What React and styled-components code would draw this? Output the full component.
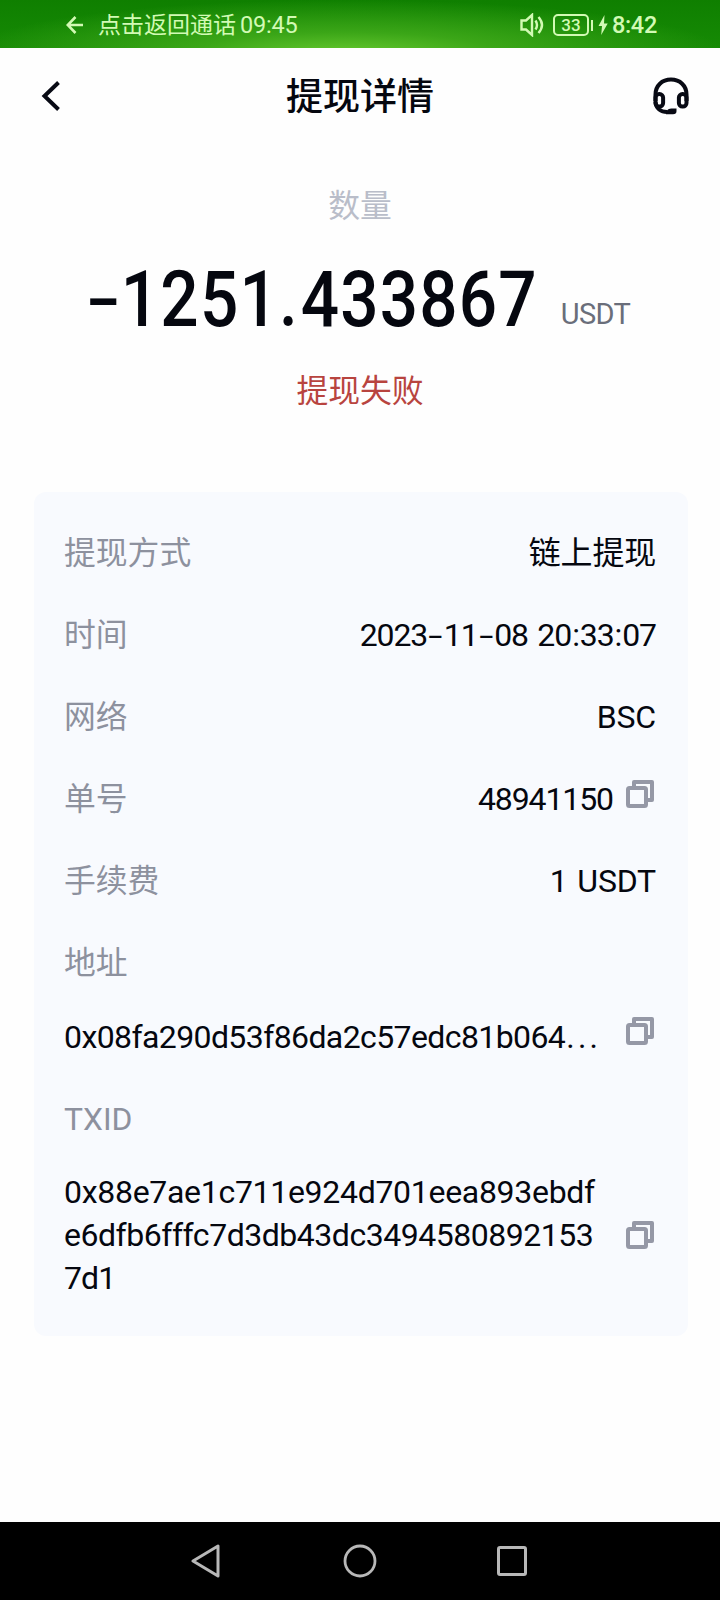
import React from "react";
import styled, { createGlobalStyle } from "styled-components";

const GlobalStyle = createGlobalStyle`
  * { box-sizing: border-box; }
  body {
    margin: 0;
    background: #fefefe;
    font-family: Roboto, "Noto Sans CJK SC", sans-serif;
    color: #05070f;
  }
`;

const Screen = styled.div`
  width: 720px;
  height: 1600px;
  display: flex;
  flex-direction: column;
  background: #fefefe;
  overflow: hidden;
`;

const StatusBar = styled.div`
  height: 48px;
  flex: none;
  display: flex;
  justify-content: space-between;
  align-items: center;
  padding: 2px 63px 0 66px;
  color: #d2fab4;
  background:
    radial-gradient(ellipse 380px 54px at 48% 112%, #66c92f 0%, rgba(72, 176, 30, 0.75) 40%, rgba(20, 132, 4, 0) 100%),
    linear-gradient(#0f7f00, #168a05);
`;

const StatusGroup = styled.div`
  display: flex;
  align-items: center;
`;

const ReturnText = styled.span`
  margin-left: 14px;
  padding-top: 2px;
  font-size: 23px;
  line-height: 30px;
  white-space: nowrap;
`;

const CallTime = styled.span`
  margin-left: 4px;
  font-size: 23.5px;
  line-height: 30px;
  letter-spacing: -0.2px;
`;

const Battery = styled.div`
  width: 36px;
  height: 22px;
  margin-left: 9px;
  border: 2px solid currentColor;
  border-radius: 5px;
  font-size: 17px;
  line-height: 18px;
  font-weight: 500;
  text-align: center;
`;

const BatteryTip = styled.div`
  width: 2px;
  height: 11px;
  margin: 0 5px 0 2px;
  background: currentColor;
`;

const Clock = styled.span`
  margin-left: 4px;
  font-size: 23.5px;
  line-height: 30px;
  font-weight: 500;
  letter-spacing: -0.3px;
`;

const Header = styled.header`
  height: 96px;
  flex: none;
  display: flex;
  align-items: center;
  justify-content: space-between;
  padding: 0 31px 0 40px;
`;

const HeaderSide = styled.div`
  width: 40px;
  display: flex;
  justify-content: ${(p) => p.$align || "flex-start"};
`;

const Title = styled.h1`
  margin: 0 0 0 -9px;
  padding-top: 3px;
  font-size: 37px;
  line-height: 52px;
  font-weight: 500;
`;

const Summary = styled.section`
  height: 348px;
  flex: none;
  display: flex;
  flex-direction: column;
  align-items: center;
  padding-top: 39px;
`;

const Caption = styled.div`
  font-size: 31.8px;
  line-height: 46px;
  color: ${(p) => p.$color};
`;

const AmountLine = styled.div`
  display: flex;
  align-items: baseline;
  margin: 21px 4px 23px 0;
  height: 95px;
  line-height: 95px;
  white-space: nowrap;
`;

const Amount = styled.span`
  display: block;
  width: 452px;
  font-size: 77.5px;
  font-weight: 500;
  letter-spacing: 1.4px;
  transform: translateY(2px) scaleX(0.87);
  transform-origin: left center;
`;

const Dash = styled.span`
  display: inline-block;
  width: ${(p) => p.$width || "0.52em"};
  text-align: center;
  letter-spacing: 0;
  transform: ${(p) => p.$scale || "scaleX(1.6)"};
`;

const Point = styled.span`
  padding-right: 2px;
`;

const Colon = styled.span`
  padding: 0 1px;
`;

const Unit = styled.span`
  margin-left: 23px;
  font-size: 29px;
  letter-spacing: -0.6px;
  color: #6a6e7a;
`;

const Card = styled.section`
  width: 654px;
  height: 844px;
  flex: none;
  margin-left: 34px;
  padding: 19px 32px 0 30px;
  border-radius: 12px;
  background: #f8fafe;
`;

const Row = styled.div`
  height: 82px;
  display: flex;
  align-items: center;
  justify-content: space-between;
`;

const Label = styled.span`
  padding-top: 2px;
  font-size: 31.8px;
  line-height: 46px;
  color: #8d919e;
`;

const Value = styled.span`
  display: flex;
  align-items: center;
  padding-top: 1px;
  font-size: 32px;
  line-height: 46px;
  letter-spacing: ${(p) => p.$spacing || "0"};
  word-spacing: ${(p) => p.$wordGap || "0"};
  white-space: pre;
`;

const HashRow = styled.div`
  display: flex;
  justify-content: space-between;
  align-items: ${(p) => (p.$multi ? "center" : "flex-start")};
  height: ${(p) => (p.$multi ? "152px" : "74px")};
  padding: ${(p) => (p.$multi ? "1px 0 0" : "13px 0 0")};
`;

const Hash = styled.div`
  font-size: 32px;
  line-height: 43px;
  white-space: nowrap;
`;

const HashLine = styled.div`
  letter-spacing: ${(p) => p.$spacing};
`;

const Ellipsis = styled.span`
  padding-left: 1px;
  letter-spacing: 3.2px;
`;

const IconSlot = styled.span`
  display: flex;
  margin: ${(p) => p.$margin || "0"};
`;

const NavBar = styled.nav`
  height: 78px;
  flex: none;
  margin-top: auto;
  display: flex;
  justify-content: space-between;
  align-items: center;
  padding: 0 193px 0 191px;
  background: #000;
`;

const CopyIcon = () => (
  <svg width="28" height="28" viewBox="0 0 28 28" fill="none" stroke="#9598a6" strokeWidth="4">
    <rect x="2" y="8" width="18" height="18" rx="1.5" />
    <path d="M8 6V2h18v18h-4" strokeLinejoin="round" />
  </svg>
);

const BackArrow = () => (
  <svg width="18" height="18" viewBox="0 0 18 18" fill="none" stroke="currentColor" strokeWidth="2.6">
    <path d="M17 9H2M9.5 1L1.7 9L9.5 17" />
  </svg>
);

const SpeakerIcon = () => (
  <svg width="24" height="24" viewBox="0 0 24 24" fill="none" stroke="currentColor" strokeWidth="2.4">
    <path d="M1.5 7.5H6L12 2V22L6 16.5H1.5Z" />
    <path d="M15.5 7.5Q18.5 12 15.5 16.5M18.5 4Q25.5 12 18.5 20" />
  </svg>
);

const BoltIcon = () => (
  <svg width="10" height="20" viewBox="0 0 10 20" fill="currentColor">
    <path d="M6.5 0L0.5 11H4L3.2 20L9.7 8.5H6Z" />
  </svg>
);

const ChevronIcon = () => (
  <svg width="22" height="32" viewBox="0 0 22 32" fill="none" stroke="#080a14" strokeWidth="4">
    <path d="M18.5 2.5L4.5 16L18.5 29.5" />
  </svg>
);

const HeadsetIcon = () => (
  <svg width="36" height="38" viewBox="0 0 36 38" fill="none" stroke="#080a14" strokeWidth="4">
    <path d="M2.5 24V17.5C2.5 8.5 9 2.6 18 2.6S33.5 8.5 33.5 17.5V24" />
    <rect x="2.5" y="17" width="7.6" height="12.6" rx="3.6" />
    <rect x="25.9" y="17" width="7.6" height="12.6" rx="3.6" />
    <path d="M2.5 25C3 31.5 8 35 14 35" />
    <path d="M18.5 31.5H23.5V34Q23.5 37.3 20 37.3H13V34.5Q15 31.5 18.5 31.5Z" fill="#080a14" stroke="none" />
  </svg>
);

const NavBack = () => (
  <svg width="30" height="34" viewBox="0 0 30 34" fill="none" stroke="#b8b8b8" strokeWidth="3" strokeLinejoin="round">
    <path d="M27 2V32L2 17Z" />
  </svg>
);

const HomeSlot = styled.span`
  display: flex;
  margin-left: 2px;
`;

const NavHome = () => (
  <svg width="34" height="34" viewBox="0 0 34 34" fill="none" stroke="#b8b8b8" strokeWidth="2.8">
    <circle cx="17" cy="17" r="15" />
  </svg>
);

const NavRecent = () => (
  <svg width="30" height="30" viewBox="0 0 30 30" fill="none" stroke="#b8b8b8" strokeWidth="3">
    <rect x="1.5" y="1.5" width="27" height="27" rx="1.5" />
  </svg>
);

export default function App() {
  return (
    <Screen>
      <GlobalStyle />
      <StatusBar>
        <StatusGroup>
          <BackArrow />
          <ReturnText>点击返回通话</ReturnText>
          <CallTime>09:45</CallTime>
        </StatusGroup>
        <StatusGroup>
          <SpeakerIcon />
          <Battery>33</Battery>
          <BatteryTip />
          <BoltIcon />
          <Clock>8:42</Clock>
        </StatusGroup>
      </StatusBar>

      <Header>
        <HeaderSide><ChevronIcon /></HeaderSide>
        <Title>提现详情</Title>
        <HeaderSide $align="flex-end"><HeadsetIcon /></HeaderSide>
      </Header>

      <Summary>
        <Caption $color="#b9bdc9">数量</Caption>
        <AmountLine>
          <Amount><Dash $width="40px" $scale="scale(1.5, 0.9)">-</Dash>1251<Point>.</Point>433867</Amount>
          <Unit>USDT</Unit>
        </AmountLine>
        <Caption $color="#b8443f">提现失败</Caption>
      </Summary>

      <Card>
        <Row>
          <Label>提现方式</Label>
          <Value $spacing="-0.2px">链上提现</Value>
        </Row>
        <Row>
          <Label>时间</Label>
          <Value $spacing="-1.1px" $wordGap="2.5px">2023<Dash>-</Dash>11<Dash>-</Dash>08 20<Colon>:</Colon>33<Colon>:</Colon>07</Value>
        </Row>
        <Row>
          <Label>网络</Label>
          <Value $spacing="-0.2px">BSC</Value>
        </Row>
        <Row>
          <Label>单号</Label>
          <Value $spacing="-1.1px">
            48941150
            <IconSlot $margin="-10px 2px 0 13px"><CopyIcon /></IconSlot>
          </Value>
        </Row>
        <Row>
          <Label>手续费</Label>
          <Value $spacing="-0.2px" $wordGap="2px">1 USDT</Value>
        </Row>
        <Row>
          <Label>地址</Label>
        </Row>
        <HashRow>
          <Hash>
            <HashLine $spacing="-0.6px">0x08fa290d53f86da2c57edc81b064<Ellipsis>...</Ellipsis></HashLine>
          </Hash>
          <IconSlot $margin="1px 2px 0 0"><CopyIcon /></IconSlot>
        </HashRow>
        <Row>
          <Label>TXID</Label>
        </Row>
        <HashRow $multi>
          <Hash>
            <HashLine $spacing="-0.3px">0x88e7ae1c711e924d701eea893ebdf</HashLine>
            <HashLine $spacing="-0.47px">e6dfb6fffc7d3db43dc3494580892153</HashLine>
            <HashLine $spacing="-0.9px">7d1</HashLine>
          </Hash>
          <IconSlot $margin="-2px 2px 0 0"><CopyIcon /></IconSlot>
        </HashRow>
      </Card>

      <NavBar>
        <NavBack />
        <HomeSlot><NavHome /></HomeSlot>
        <NavRecent />
      </NavBar>
    </Screen>
  );
}
